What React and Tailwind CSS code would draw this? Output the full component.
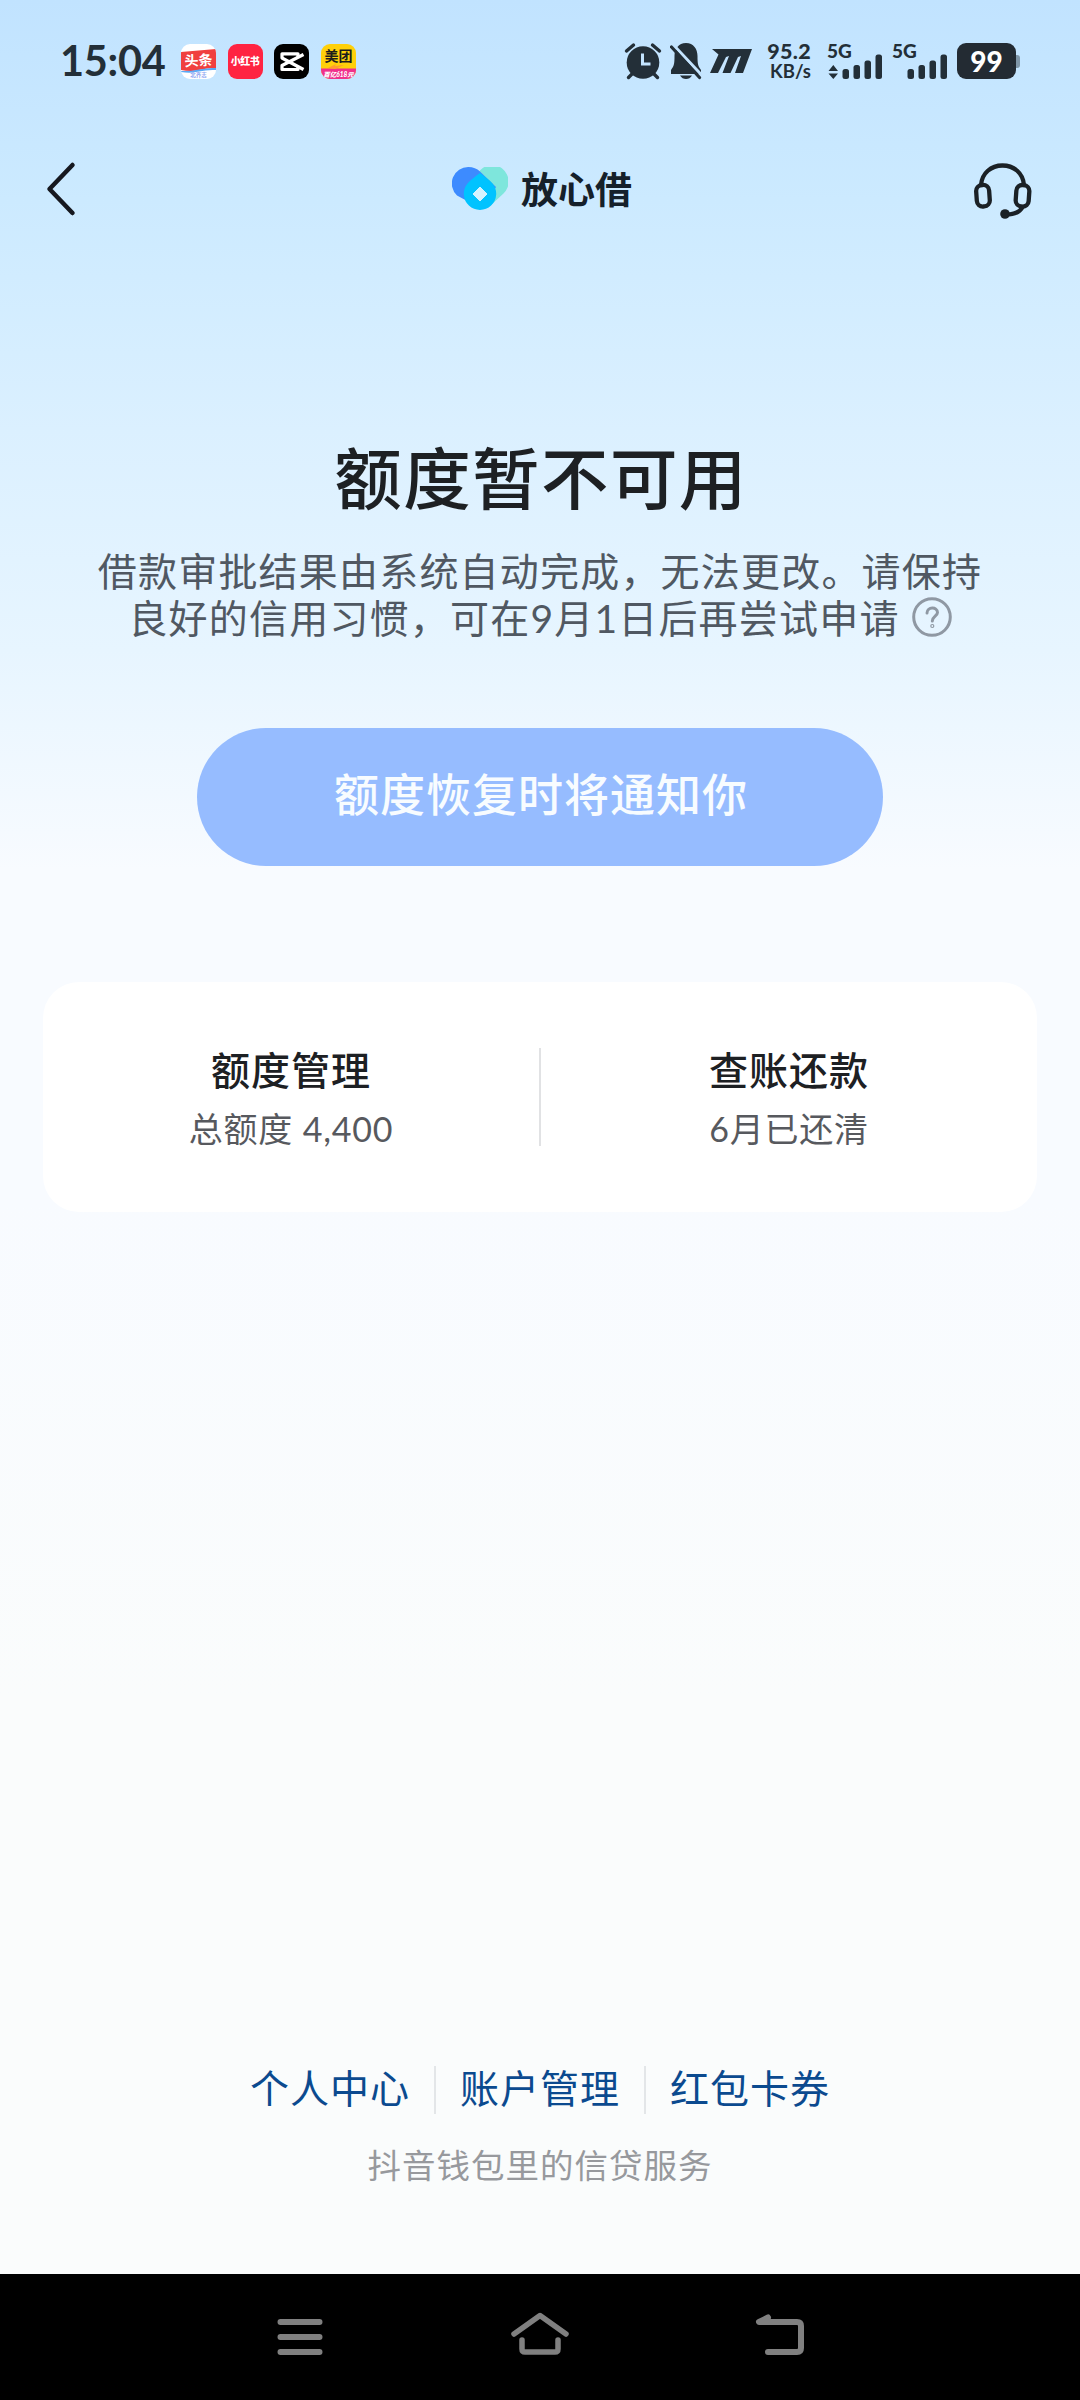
import React from "react";

const services = [
  { title: "额度管理", desc: "总额度 4,400" },
  { title: "查账还款", desc: "6月已还清" },
];

const links = ["个人中心", "账户管理", "红包卡券"];

function ToutiaoIcon() {
  return (
    <div className="w-[35px] h-[35px] rounded-[9px] overflow-hidden bg-white">
      <svg viewBox="0 0 35 35" className="w-full h-full">
        <path d="M0 8 L35 5 V24 Q26 24 18 26 T0 26 Z" fill="#f0403f" />
        <path d="M0 27 Q9 27.5 18 25.5 T35 24 V26 Q26 25.500 18 27.500 T0 28 Z" fill="#5aa9f5" />
        <text x="17.500" y="21.500" fontSize="14" fontWeight="700" fill="#fff" textAnchor="middle" transform="rotate(-3 17 17)">头条</text>
        <text x="17.500" y="33" fontSize="5.500" fontWeight="700" fill="#8fa6f2" textAnchor="middle">北齐志</text>
      </svg>
    </div>
  );
}

function XhsIcon() {
  return (
    <div className="w-[35px] h-[35px] rounded-[9px] bg-[#ff2442] flex items-center justify-center text-white text-[10px] leading-none font-black tracking-[-0.5px] whitespace-nowrap">
      小红书
    </div>
  );
}

function CapcutIcon() {
  return (
    <div className="w-[35px] h-[35px] rounded-[9px] bg-black">
      <svg viewBox="0 0 35 35" className="w-full h-full" fill="none" stroke="#fff" strokeWidth="3.200" strokeLinejoin="round">
        <path d="M29.500 10.500 L8 21.500 V25.500 H24 V22" />
        <path d="M29.500 25.500 L8 14 V9.800 H24 V13.500" />
      </svg>
    </div>
  );
}

function MeituanIcon() {
  return (
    <div className="w-[35px] h-[35px] rounded-[9px] overflow-hidden bg-[#ffd00a]">
      <svg viewBox="0 0 35 35" className="w-full h-full">
        <path d="M0 24.500 H35 V35 H0 Z" fill="#f0308c" />
        <path d="M7 24 L15 20 L14 22 L23 21 L14 25 Z" fill="#ff9d2e" />
        <text x="17.500" y="17" fontSize="14" fontWeight="700" fill="#1c1c1c" textAnchor="middle">美团</text>
        <text x="17.500" y="32.500" fontSize="6.500" fontWeight="900" fontStyle="italic" fill="#fff" textAnchor="middle">
          百亿618元
        </text>
      </svg>
    </div>
  );
}

function AlarmIcon() {
  return (
    <svg viewBox="0 0 38 38" className="w-[38px] h-[38px]" fill="none" strokeLinecap="round">
      <circle cx="19" cy="20.500" r="16.300" fill="#232f38" />
      <path d="M2.500 9 L9.500 3 M35.500 9 L28.500 3 M8 32 L4.500 35.500 M30 32 L33.500 35.500" stroke="#232f38" strokeWidth="3.400" />
      <path d="M18.500 11.500 V22 H26.500" stroke="#c3e4ff" strokeWidth="3" strokeLinecap="butt" />
    </svg>
  );
}

function BellOffIcon() {
  return (
    <svg viewBox="0 0 32 38" className="w-[32px] h-[38px] ml-[8px]" fill="none">
      <path d="M16 1 C8.500 1 4.500 7 4.500 14 C4.500 22 4 24 1 28 V32 H31 V28 C28 24 27.500 22 27.500 14 C27.500 7 23.500 1 16 1 Z" fill="#232f38" />
      <path d="M10 33.500 H22 C20.500 36 18.500 37 16 37 C13.500 37 11.500 36 10 33.500 Z" fill="#232f38" />
      <path d="M3.500 3 L32 33.500" stroke="#c3e4ff" strokeWidth="3" />
      <path d="M1.500 5 L29.500 35.500" stroke="#232f38" strokeWidth="3.200" strokeLinecap="round" />
    </svg>
  );
}

function MIcon() {
  return (
    <svg viewBox="0 0 42 24" className="w-[42px] h-[24px] ml-[8px]" fill="#232f38">
      <path d="M2 0 H42 L33 24 H25 L31 7 L28 8 L20.500 24 H12.500 L19 7 L16 8 L8 24 H0 L8.500 5.500 Z" />
    </svg>
  );
}

function Signal({ arrows }) {
  return (
    <div className="relative w-[55px] h-[36px]">
      <span className="absolute -left-px top-[-2px] font-[Lato] font-black text-[19px] leading-[19px]">5G</span>
      <svg viewBox="0 0 55 36" className="w-[55px] h-[36px]" fill="#232f38">
        {arrows && <path d="M0.500 28 L5.300 22 L10 28 Z M0.500 30.500 L5.300 36 L10 30.500 Z" />}
        <rect x="14.500" y="26" width="6.500" height="10" rx="2.500" />
        <rect x="25.500" y="22" width="6.500" height="14" rx="2.500" />
        <rect x="36.500" y="17.500" width="6.500" height="18.500" rx="2.500" />
        <rect x="47.500" y="11.500" width="6.500" height="24.500" rx="2.500" />
      </svg>
    </div>
  );
}

function StatusBar() {
  return (
    <div className="flex items-center justify-between h-[122px] pl-[60px] pr-[60px] text-[#232f38]">
      <div className="flex items-center">
        <span className="w-[121px] font-[Lato] font-bold text-[41.500px] leading-none tracking-[-0.300px]">15:04</span>
        <div className="flex gap-[11.600px]">
          <ToutiaoIcon />
          <XhsIcon />
          <CapcutIcon />
          <MeituanIcon />
        </div>
      </div>
      <div className="flex items-center">
        <AlarmIcon />
        <BellOffIcon />
        <MIcon />
        <div className="ml-[13px] w-[46px] flex flex-col items-end font-[Lato] font-black leading-[20px] whitespace-nowrap">
          <span className="text-[21.500px] tracking-[0.300px]">95.2</span>
          <span className="text-[18.500px] font-bold">KB/s</span>
        </div>
        <div className="flex gap-[10px] ml-[17px]">
          <Signal arrows />
          <Signal />
        </div>
        <div className="flex items-center ml-[9px]">
          <div className="w-[59px] h-[36px] rounded-[9px] bg-[#232b33] text-white font-[Lato] font-black text-[28px] leading-none flex items-center justify-center">
            99
          </div>
          <div className="w-[4px] h-[13px] rounded-r-[3px] bg-[#7f96a8]" />
        </div>
      </div>
    </div>
  );
}

function Header() {
  return (
    <div className="flex items-center justify-between h-[134px] pl-[46px] pr-[48px]">
      <svg viewBox="0 0 58 56" className="w-[58px] h-[56px]" fill="none" stroke="#16181f" strokeWidth="4.500" strokeLinecap="round" strokeLinejoin="round">
        <path d="M26.500 4 L3.500 28 L26.500 52" />
      </svg>
      <div className="flex items-center pl-[6px]">
        <svg viewBox="0 0 56 44" className="w-[56px] h-[44px]">
          <path d="M26 6 A16.500 16.500 0 1 1 51.500 26.500 L38 39 L18 20 Z" fill="#7ee6dc" />
          <path d="M16.500 0 C21 0 25 1.500 28 4.500 L44 20 L30 42 L5 28.500 A16.500 16.500 0 0 1 16.500 0 Z" fill="#3d8bff" />
          <path d="M28 6 C32 9 37 12.500 40.500 16.500 A16.200 16.200 0 1 1 15.500 16.500 C19 12.500 24 9 28 6 Z" fill="#00c3ff" />
          <path d="M28 20 L35 27 L28 34 L21 27 Z" fill="#d5f3ff" stroke="#d5f3ff" strokeLinejoin="round" />
        </svg>
        <h1 className="ml-[13px] text-[37px] leading-none font-bold text-[#15202a]">放心借</h1>
      </div>
      <svg viewBox="0 0 58 58" className="w-[58px] h-[58px] mt-[4px]" fill="none" stroke="#1b2126" strokeWidth="4.300" strokeLinecap="round">
        <path d="M7 23 C8 11 17 3.500 28.500 3.500 C40 3.500 49 11 50 23" />
        <rect x="2.500" y="23" width="13" height="21.500" rx="6" transform="rotate(-4 9 34)" />
        <rect x="42" y="23" width="13" height="21.500" rx="6" transform="rotate(4 48 34)" />
        <path d="M48.500 45 C46 50 40 52.500 32 52.500" />
        <circle cx="31" cy="52" r="4.800" fill="#1b2126" stroke="none" />
      </svg>
    </div>
  );
}

function NavBar() {
  return (
    <nav className="h-[126px] bg-black flex items-center justify-between px-[270px]">
      <svg viewBox="0 0 60 60" className="w-[60px] h-[60px]" stroke="#808080" strokeWidth="6" strokeLinecap="round">
        <path d="M10.500 15 H49.500 M10.500 30 H49.500 M10.500 45 H49.500" />
      </svg>
      <svg viewBox="0 0 60 60" className="w-[60px] h-[60px]" fill="none" stroke="#808080" strokeWidth="5.500" strokeLinecap="round" strokeLinejoin="round">
        <path d="M4 27 L30 8.500 L56 27" />
        <path d="M12 33 V42 Q12 45 15 45 H45 Q48 45 48 42 V33" />
      </svg>
      <svg viewBox="0 0 60 60" className="w-[60px] h-[60px]" fill="none" stroke="#808080" strokeWidth="6" strokeLinecap="round" strokeLinejoin="round">
        <path d="M18 10.500 L9 15 H47 Q51 15 51 19 V41 Q51 45 47 45 H18" />
      </svg>
    </nav>
  );
}

export default function App() {
  return (
    <div className="w-[1080px] h-[2400px] flex flex-col overflow-hidden font-['Lato','Noto_Sans_CJK_SC',sans-serif] bg-[linear-gradient(180deg,#c1e3ff_0px,#cceaff_200px,#dbf0ff_430px,#e7f5ff_650px,#f8fbff_870px,#f8fbff_1200px,#fafcfc_1700px,#fafcfc_2400px)]">
      <StatusBar />
      <Header />

      {/* Statut du crédit */}
      <main className="flex-1 flex flex-col items-center">
        <h2 className="mt-[172px] h-[100px] pl-[2px] text-[67.500px] leading-[100px] tracking-[1.400px] font-medium text-[#1d2023] whitespace-nowrap">额度暂不可用</h2>
        <div className="mt-[20px] text-[39px] leading-[47px] tracking-[1.200px] text-[#505862] text-center whitespace-nowrap">
          <p>借款审批结果由系统自动完成，无法更改。请保持</p>
          <p className="flex items-center justify-center">
            良好的信用习惯，可在9月1日后再尝试申请
            <svg viewBox="0 0 40 40" className="ml-[12px] mb-[3px] w-[40px] h-[40px]" fill="none" stroke="#8f98a3" strokeWidth="3" strokeLinecap="round">
              <circle cx="20" cy="20" r="18.300" />
              <path d="M15 16 C15 9.500 25.500 9.500 25.500 15.500 C25.500 19 20.300 19.500 20.300 24" />
              <circle cx="20.300" cy="29" r="0.600" />
            </svg>
          </p>
        </div>
        <button className="mt-[86px] w-[686px] h-[138px] pb-[3px] pl-[2px] rounded-full bg-[#96bcff] text-[#f8fcff] text-[45px] tracking-[1px] font-medium">
          额度恢复时将通知你
        </button>

        <section className="mt-[116px] w-[994px] h-[230px] rounded-[36px] bg-white flex items-center">
          {services.map((s, i) => (
            <React.Fragment key={s.title}>
              {i > 0 && <div className="w-[2px] h-[98px] bg-[#e1e2e4]" />}
              <div className="flex-1 text-center pt-[6px]">
                <div className="text-[39px] leading-[58px] tracking-[1px] font-medium text-[#1d2023]">{s.title}</div>
                <div className="text-[34px] leading-[60px] tracking-[0.800px] text-[#57595e]">{s.desc}</div>
              </div>
            </React.Fragment>
          ))}
        </section>

        <div className="flex items-center mt-auto h-[48px]">
          {links.map((link, i) => (
            <React.Fragment key={link}>
              {i > 0 && <div className="w-[2px] h-[48px] mx-[24px] bg-[#e3e6e8]" />}
              <a href="#" className="text-[39px] leading-[48px] tracking-[1px] pb-[4px] text-[#0b4a8f]">{link}</a>
            </React.Fragment>
          ))}
        </div>
        <p className="mt-[26px] mb-[84px] text-[33.500px] leading-[50px] tracking-[1px] text-[#97999d]">抖音钱包里的信贷服务</p>
      </main>

      <NavBar />
    </div>
  );
}
